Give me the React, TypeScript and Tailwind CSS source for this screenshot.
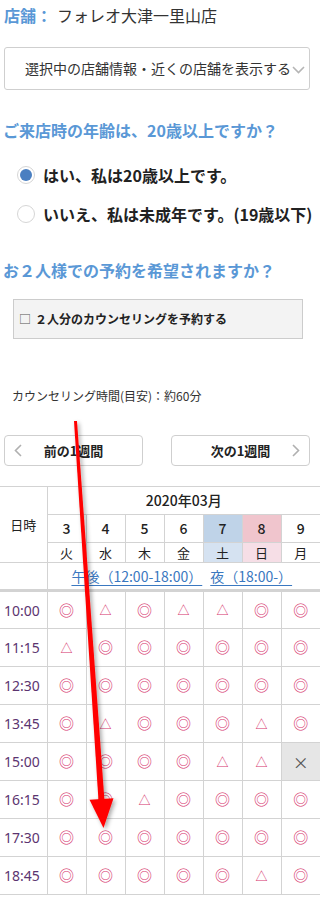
const FONT = { fontFamily: '"Noto Sans CJK JP", "Noto Sans", sans-serif' };

const days = [
  { n: "3", w: "火", kind: "" },
  { n: "4", w: "水", kind: "" },
  { n: "5", w: "木", kind: "" },
  { n: "6", w: "金", kind: "" },
  { n: "7", w: "土", kind: "sat" },
  { n: "8", w: "日", kind: "sun" },
  { n: "9", w: "月", kind: "" },
];

const slots = [
  { t: "10:00", s: "◎△◎△△◎◎" },
  { t: "11:15", s: "△◎◎◎◎◎◎" },
  { t: "12:30", s: "◎◎◎◎◎◎◎" },
  { t: "13:45", s: "◎△◎◎◎△◎" },
  { t: "15:00", s: "◎◎◎◎△△×" },
  { t: "16:15", s: "◎◎△◎◎◎◎" },
  { t: "17:30", s: "◎◎◎◎◎◎◎" },
  { t: "18:45", s: "◎◎◎◎◎△◎" },
];

function Chevron({ dir }: { dir: "left" | "right" | "down" }) {
  if (dir === "down") {
    return (
      <svg width="13" height="8" viewBox="0 0 13 8" className="shrink-0">
        <polyline points="1,1 6.5,6.5 12,1" fill="none" stroke="#b5b5b5" strokeWidth="1.6" />
      </svg>
    );
  }
  return (
    <svg width="8" height="13" viewBox="0 0 8 13">
      <polyline
        points={dir === "left" ? "7,1 1.5,6.5 7,12" : "1,1 6.5,6.5 1,12"}
        fill="none"
        stroke="#b0b0b0"
        strokeWidth="1.6"
      />
    </svg>
  );
}

function Radio({ checked, label }: { checked?: boolean; label: string }) {
  return (
    <div className="flex items-center gap-2 pl-[17px] whitespace-nowrap">
      <span className="flex h-[18px] w-[18px] shrink-0 items-center justify-center rounded-full border border-[#d6d6d6] bg-white">
        {checked && <span className="h-[12px] w-[12px] rounded-full bg-[#4a7fc1]" />}
      </span>
      <span className="text-[16px] leading-[24px] font-bold text-[#222]">{label}</span>
    </div>
  );
}

function Arrow() {
  return (
    <svg className="pointer-events-none absolute left-0 top-0" width="320" height="899">
      <defs>
        <filter id="sh" x="-50%" y="-10%" width="200%" height="120%">
          <feDropShadow dx="2" dy="2" stdDeviation="2" floodColor="#000" floodOpacity="0.35" />
        </filter>
      </defs>
      <g filter="url(#sh)" fill="#ff0000">
        <polygon points="74,421 77,421 104.5,801 98.5,801" />
        <polygon points="89.5,799.8 113.5,798.2 103.5,828" />
      </g>
    </svg>
  );
}

export default function App() {
  return (
    <div className="relative w-[320px] overflow-hidden bg-white text-[#222]" style={FONT}>
      {/* store */}
      <div className="mt-[3px] pl-[4px] text-[16px] leading-[24px] whitespace-nowrap">
        <span className="font-bold text-[#5a98d6]">店舗：</span>
        <span className="ml-[5px] text-[#333]">フォレオ大津一里山店</span>
      </div>

      <div className="mt-[20px] ml-[4px] flex h-[43px] w-[306px] items-center rounded-[3px] border border-[#cfcfcf] pl-[20px] pr-[6px]">
        <span className="text-[14px] whitespace-nowrap text-[#333]">選択中の店舗情報・近くの店舗を表示する</span>
        <span className="ml-[1px] mt-[2px]">
          <Chevron dir="down" />
        </span>
      </div>

      {/* age */}
      <h2 className="mt-[28px] pl-[3px] text-[16px] leading-[24px] font-bold text-[#5a98d6] whitespace-nowrap">
        ご来店時の年齢は、20歳以上ですか？
      </h2>
      <div className="mt-[21px]">
        <Radio checked label="はい、私は20歳以上です。" />
      </div>
      <div className="mt-[15px]">
        <Radio label="いいえ、私は未成年です。(19歳以下)" />
      </div>

      {/* pair */}
      <h2 className="mt-[32px] pl-[3px] text-[16px] leading-[24px] font-bold text-[#5a98d6] whitespace-nowrap">
        お２人様での予約を希望されますか？
      </h2>
      <div className="mt-[17px] ml-[13px] flex h-[40px] w-[290px] items-center border border-[#cccccc] bg-[#f3f3f3] pl-[5px]">
        <span className="text-[12px] text-[#555]">□</span>
        <span className="ml-[4px] text-[12px] font-bold text-[#222] whitespace-nowrap">２人分のカウンセリングを予約する</span>
      </div>

      <p className="mt-[48px] pl-[12px] text-[12px] leading-[18px] text-[#333]">カウンセリング時間(目安)：約60分</p>

      {/* week nav */}
      <div className="mt-[30px] flex justify-between px-[4px] pr-[10px]">
        <button className="flex h-[31px] w-[139px] items-center rounded-[4px] border border-[#cfcfcf] bg-white px-[9px]">
          <Chevron dir="left" />
          <span className="flex-1 pr-[8px] text-[13px] font-bold text-[#222]">前の1週間</span>
        </button>
        <button className="flex h-[31px] w-[139px] items-center rounded-[4px] border border-[#cfcfcf] bg-white px-[9px]">
          <span className="flex-1 pl-[8px] text-[13px] font-bold text-[#222]">次の1週間</span>
          <Chevron dir="right" />
        </button>
      </div>

      {/* calendar */}
      <table className="mt-[20px] w-[320px] table-fixed border-collapse text-center">
        <colgroup>
          <col className="w-[47px]" />
          {days.map((d) => (
            <col key={d.n} className="w-[39px]" />
          ))}
        </colgroup>
        <thead>
          <tr className="h-[28px]">
            <th rowSpan={3} className="border border-l-0 border-[#d3d3d3] text-[13px] font-normal text-[#222]">
              日時
            </th>
            <th colSpan={7} className="border border-r-0 border-[#d3d3d3] text-[14px] font-medium text-[#222]">
              2020年03月
            </th>
          </tr>
          <tr className="h-[28px]">
            {days.map((d) => (
              <td
                key={d.n}
                className={
                  "border border-[#d3d3d3] text-[14px] font-medium text-[#222] last:border-r-0 " +
                  (d.kind === "sat" ? "bg-[#bfd3e8]" : d.kind === "sun" ? "bg-[#f0c5cd]" : "")
                }
              >
                {d.n}
              </td>
            ))}
          </tr>
          <tr className="h-[20px]">
            {days.map((d) => (
              <td
                key={d.n}
                className={
                  "border border-[#d3d3d3] text-[13px] leading-[18px] text-[#222] last:border-r-0 " +
                  (d.kind === "sat" ? "bg-[#d5e2f1]" : d.kind === "sun" ? "bg-[#f6dee6]" : "")
                }
              >
                {d.w}
              </td>
            ))}
          </tr>
          <tr className="h-[28px]">
            <td className="border border-b-[3px] border-l-0 border-[#d3d3d3]" />
            <td colSpan={7} className="border border-b-[3px] border-r-0 border-[#d3d3d3] pr-[4px] text-[14px] text-[#3a78c0]">
              <span className="underline underline-offset-[3px]">午後（12:00-18:00）</span>
              <span className="ml-[8px] underline underline-offset-[3px]">夜（18:00-）</span>
            </td>
          </tr>
        </thead>
        <tbody>
          {slots.map((row) => (
            <tr key={row.t} className="h-[38px]">
              <td
                className="border border-l-0 border-[#d3d3d3] pl-[4px] text-left text-[14px] text-[#5c3470]"
                style={{ fontFamily: '"Noto Sans", sans-serif' }}
              >
                {row.t}
              </td>
              {row.s.split("").map((c, i) =>
                c === "×" ? (
                  <td key={i} className="border border-r-0 border-[#d3d3d3] bg-[#e6e6e6] text-[16px] text-[#555]">
                    ×
                  </td>
                ) : (
                  <td
                    key={i}
                    className={
                      "border border-[#d3d3d3] text-[#d6336c] last:border-r-0 " +
                      (c === "△" ? "text-[12px]" : "text-[15px]")
                    }
                  >
                    {c}
                  </td>
                )
              )}
            </tr>
          ))}
        </tbody>
      </table>

      <Arrow />
    </div>
  );
}
